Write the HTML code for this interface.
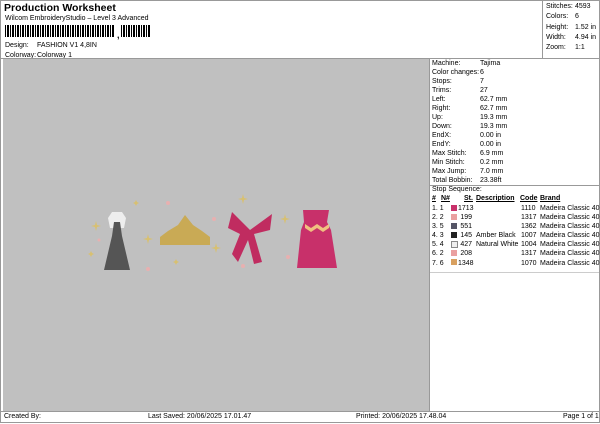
<!DOCTYPE html><html><head><style>
body{margin:0;width:600px;height:424px;background:#fff;font-family:"Liberation Sans",sans-serif;font-size:7px;color:#000;position:relative;overflow:hidden}
.a{position:absolute;white-space:nowrap}
.bc{position:absolute;left:5px;top:25px;width:110px;height:12px;background:repeating-linear-gradient(90deg,#000 0 1px,#fff 1px 2px,#000 2px 4px,#fff 4px 5px)}
</style></head><body>
<div class="a" style="left:0;top:0;width:598px;height:421px;border:1px solid #999"></div>
<div class="a" style="left:4px;top:2px;font-size:10.5px;font-weight:bold">Production Worksheet</div>
<div class="a" style="left:5px;top:15px">Wilcom EmbroideryStudio – Level 3 Advanced</div>
<div class="bc"></div><div class="a" style="left:117px;top:25px;width:4px;height:12px;background:#fff"></div>
<div class="a" style="left:117px;top:30px;font-size:9px;font-weight:bold">,</div>
<div class="bc" style="left:121px;width:30px"></div>
<div class="a" style="left:5px;top:42px">Design:</div><div class="a" style="left:37px;top:42px">FASHION V1 4,8IN</div>
<div class="a" style="left:5px;top:52px">Colorway:</div><div class="a" style="left:37px;top:52px">Colorway 1</div>
<div class="a" style="left:542px;top:0;width:1px;height:58px;background:#999"></div>
<div class="a" style="left:546px;top:2px;line-height:10.3px">Stitches:<br>Colors:<br>Height:<br>Width:<br>Zoom:</div>
<div class="a" style="left:575px;top:2px;line-height:10.3px">4593<br>6<br>1.52 in<br>4.94 in<br>1:1</div>
<div class="a" style="left:1px;top:58px;width:598px;height:1px;background:#999"></div>
<div class="a" style="left:3px;top:59px;width:426px;height:352px;background:#c0c0c0;border-right:1px solid #999"></div>
<div class="a" style="left:432px;top:59px;line-height:9px">Machine:<br>Color changes:<br>Stops:<br>Trims:<br>Left:<br>Right:<br>Up:<br>Down:<br>EndX:<br>EndY:<br>Max Stitch:<br>Min Stitch:<br>Max Jump:<br>Total Bobbin:</div>
<div class="a" style="left:480px;top:59px;line-height:9px">Tajima<br>6<br>7<br>27<br>62.7 mm<br>62.7 mm<br>19.3 mm<br>19.3 mm<br>0.00 in<br>0.00 in<br>6.9 mm<br>0.2 mm<br>7.0 mm<br>23.38ft</div>
<div class="a" style="left:430px;top:185px;width:169px;height:1px;background:#999"></div>
<div class="a" style="left:432px;top:186px">Stop Sequence:</div>
<div class="a" style="left:432px;top:195px;font-weight:bold;text-decoration:underline">#</div>
<div class="a" style="left:441px;top:195px;font-weight:bold;text-decoration:underline">N#</div>
<div class="a" style="left:464px;top:195px;font-weight:bold;text-decoration:underline">St.</div>
<div class="a" style="left:476px;top:195px;font-weight:bold;text-decoration:underline">Description</div>
<div class="a" style="left:520px;top:195px;font-weight:bold;text-decoration:underline">Code</div>
<div class="a" style="left:540px;top:195px;font-weight:bold;text-decoration:underline">Brand</div>
<div class="a" style="left:432px;top:204px;line-height:9.1px">1. 1<br>2. 2<br>3. 5<br>4. 3<br>5. 4<br>6. 2<br>7. 6</div>
<div class="a" style="left:451px;top:205px;width:6px;height:6px;background:#c8306a"></div>
<div class="a" style="left:451px;top:214px;width:6px;height:6px;background:#eaa0a0"></div>
<div class="a" style="left:451px;top:223px;width:6px;height:6px;background:#555566"></div>
<div class="a" style="left:451px;top:232px;width:6px;height:6px;background:#222"></div>
<div class="a" style="left:451px;top:241px;width:5px;height:5px;background:#eee;border:1px solid #888"></div>
<div class="a" style="left:451px;top:250px;width:6px;height:6px;background:#eaa0a0"></div>
<div class="a" style="left:451px;top:259px;width:6px;height:6px;background:#d8a060"></div>
<div class="a" style="left:458px;top:204px;line-height:9.1px;text-align:right;width:14px">1713<br>199<br>551<br>145<br>427<br>208<br>1348</div>
<div class="a" style="left:476px;top:204px;line-height:9.1px"><br><br><br>Amber Black<br>Natural White</div>
<div class="a" style="left:521px;top:204px;line-height:9.1px">1110<br>1317<br>1362<br>1007<br>1004<br>1317<br>1070</div>
<div class="a" style="left:540px;top:204px;line-height:9.1px">Madeira Classic 40<br>Madeira Classic 40<br>Madeira Classic 40<br>Madeira Classic 40<br>Madeira Classic 40<br>Madeira Classic 40<br>Madeira Classic 40</div>
<div class="a" style="left:430px;top:272px;width:169px;height:1px;background:#ccc"></div>
<div class="a" style="left:1px;top:411px;width:598px;height:1px;background:#999"></div>
<div class="a" style="left:4px;top:413px">Created By:</div>
<div class="a" style="left:148px;top:413px">Last Saved: 20/06/2025 17.01.47</div>
<div class="a" style="left:356px;top:413px">Printed: 20/06/2025 17.48.04</div>
<div class="a" style="left:563px;top:413px">Page 1 of 1</div>
<svg class="a" style="left:0;top:0" width="600" height="424">
<g fill="#d8c070">
<path d="M96 221l1 4 4 1-4 1-1 4-1-4-4-1 4-1z"/><path d="M148 234l1 4 4 1-4 1-1 4-1-4-4-1 4-1z"/>
<path d="M216 243l1 4 4 1-4 1-1 4-1-4-4-1 4-1z"/><path d="M285 214l1 4 4 1-4 1-1 4-1-4-4-1 4-1z"/>
<path d="M243 194l1 4 4 1-4 1-1 4-1-4-4-1 4-1z"/><path d="M91 251l1 2 2 1-2 1-1 2-1-2-2-1 2-1z"/>
<path d="M176 259l1 2 2 1-2 1-1 2-1-2-2-1 2-1z"/><path d="M136 200l1 2 2 1-2 1-1 2-1-2-2-1 2-1z"/>
</g>
<g fill="#e8b0b0"><circle cx="168" cy="203" r="2"/><circle cx="214" cy="219" r="2"/><circle cx="148" cy="269" r="2"/><circle cx="243" cy="266" r="2"/><circle cx="288" cy="257" r="2"/><circle cx="99" cy="240" r="1.5"/></g>
<path d="M108 218l4-6h10l4 6-2 10h-14z" fill="#eee"/>
<path d="M114 222h6l2 14 8 34h-26l8-34z" fill="#555"/>
<path d="M160 237l8-6 10-6 7-10 8 10 9 6 8 6v8h-50z" fill="#c9aa55"/>
<path d="M250 230l-18-18-4 16 12 6-8 20 6 8 10-22 6 24 8-2-8-28 16-4 2-16z" fill="#c02c60"/>
<path d="M303 210h26l-2 12 4 8 6 38h-40l4-38 3-8z" fill="#c8306a"/>
<path d="M305 224l6 4 6-4 6 4 6-4v4l-6 4-6-4-6 4-6-4z" fill="#f0c080"/>
</svg>
</body></html>
